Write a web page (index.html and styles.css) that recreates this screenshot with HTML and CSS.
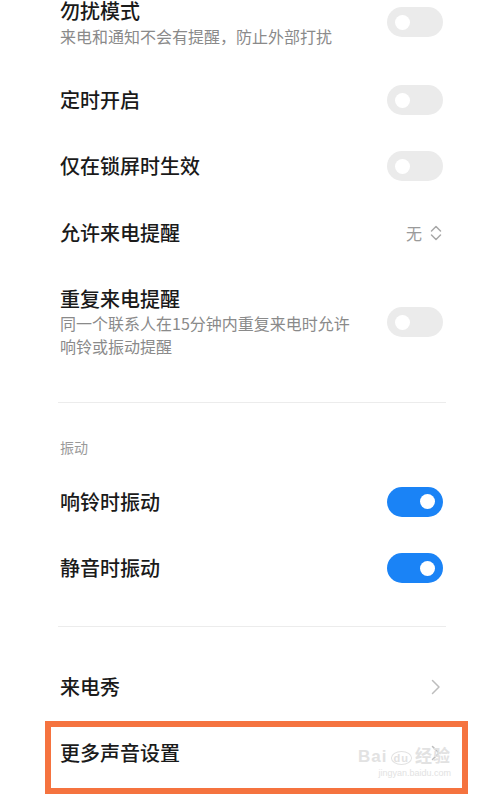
FILE: index.html
```html
<!DOCTYPE html>
<html lang="zh-CN">
<head>
    <meta charset="UTF-8">
    <meta name="viewport" content="width=device-width, initial-scale=1.0">
    <title>声音设置</title>
    <link rel="stylesheet" href="styles.css">
</head>
<body>
<div id="settings">
    <div class="item first">
        <div class="item-text">
            <div class="item-title">勿扰模式</div>
            <div class="item-desc">来电和通知不会有提醒，防止外部打扰</div>
        </div>
        <div class="switch"></div>
    </div>

    <div class="item">
        <div class="item-text">
            <div class="item-title">定时开启</div>
        </div>
        <div class="switch"></div>
    </div>

    <div class="item">
        <div class="item-text">
            <div class="item-title">仅在锁屏时生效</div>
        </div>
        <div class="switch"></div>
    </div>

    <div class="item tall">
        <div class="item-text">
            <div class="item-title">允许来电提醒</div>
        </div>
        <div class="item-value">
            无
            <svg class="updown" width="12" height="16" viewBox="0 0 12 16">
                <path d="M1.5 6 L6 1.5 L10.5 6" fill="none" stroke="#a8a8a8" stroke-width="1.5" stroke-linecap="round" stroke-linejoin="round"/>
                <path d="M1.5 10 L6 14.5 L10.5 10" fill="none" stroke="#a8a8a8" stroke-width="1.5" stroke-linecap="round" stroke-linejoin="round"/>
            </svg>
        </div>
    </div>

    <div class="item multi">
        <div class="item-text">
            <div class="item-title">重复来电提醒</div>
            <div class="item-desc">同一个联系人在15分钟内重复来电时允许<br>响铃或振动提醒</div>
        </div>
        <div class="switch"></div>
    </div>

    <div class="divider"></div>

    <div class="section-title">振动</div>

    <div class="item tall">
        <div class="item-text">
            <div class="item-title">响铃时振动</div>
        </div>
        <div class="switch on"></div>
    </div>

    <div class="item">
        <div class="item-text">
            <div class="item-title">静音时振动</div>
        </div>
        <div class="switch on"></div>
    </div>

    <div class="divider second"></div>

    <div class="item tall">
        <div class="item-text">
            <div class="item-title">来电秀</div>
        </div>
        <svg class="arrow" width="10" height="16" viewBox="0 0 10 16">
            <path d="M1.5 1.5 L8 8 L1.5 14.5" fill="none" stroke="#bdbdbd" stroke-width="1.5" stroke-linecap="round" stroke-linejoin="round"/>
        </svg>
    </div>

    <div class="item marked">
        <div class="item-text">
            <div class="item-title">更多声音设置</div>
        </div>
        <svg class="arrow" width="10" height="16" viewBox="0 0 10 16">
            <path d="M1.5 1.5 L8 8 L1.5 14.5" fill="none" stroke="#bdbdbd" stroke-width="1.5" stroke-linecap="round" stroke-linejoin="round"/>
        </svg>
        <div class="watermark">
            <span class="wm-logo">Bai<span class="wm-paw">du</span>经验</span>
            <span class="wm-url">jingyan.baidu.com</span>
        </div>
    </div>
</div>
</body>
</html>
```

FILE: styles.css
```css
body {
    margin: 0;
    padding: 0;
    background-color: #fff;
    font-family: "Noto Sans CJK SC", sans-serif;
    overflow: hidden;
}
#settings {
    padding: 0 36px 20px 60px;
}
.item {
    display: flex;
    align-items: center;
    justify-content: space-between;
    box-sizing: border-box;
    height: 66px;
    position: relative;
}
.item.tall {
    height: 67px;
}
.item.first {
    height: 67px;
    align-items: flex-start;
}
.item.multi {
    height: auto;
    padding-top: 20px;
}
.item-text {
    flex: 1;
}
.item-title {
    font-size: 20px;
    line-height: 26px;
    height: 26px;
    font-weight: 500;
    color: #1a1a1a;
}
.item.first .item-title {
    line-height: 22px;
    height: 22px;
}
.item-desc {
    font-size: 16px;
    line-height: 23px;
    color: #8a8a8a;
}
.item.first .item-desc {
    margin-top: 3px;
    height: 23px;
}
.item.multi .item-desc {
    height: 46px;
}
.item.first .switch {
    margin-top: 7px;
}
.item-value {
    display: flex;
    align-items: center;
    gap: 8px;
    font-size: 16px;
    color: #9a9a9a;
}
.switch {
    width: 56px;
    height: 30px;
    border-radius: 15px;
    background-color: #ebebeb;
    position: relative;
    flex-shrink: 0;
    margin-right: -1px;
}
.switch::after {
    content: "";
    position: absolute;
    top: 7.5px;
    left: 8px;
    width: 15px;
    height: 15px;
    border-radius: 50%;
    background-color: #fff;
}
.switch.on {
    background-color: #1a83f6;
}
.switch.on::after {
    left: auto;
    right: 8px;
}
.divider {
    height: 1px;
    background-color: #ececec;
    margin: 44px -4px 0 -2px;
}
.divider.second {
    margin-top: 25px;
    margin-bottom: 26px;
}
.section-title {
    font-size: 14px;
    line-height: 20px;
    height: 20px;
    color: #9a9a9a;
    margin-top: 34px;
    margin-bottom: 11px;
}
.arrow {
    flex-shrink: 0;
    margin-right: 1px;
}
/* orange highlight box drawn over the last row */
.marked::before {
    content: "";
    position: absolute;
    top: 1px;
    left: -15px;
    right: -26px;
    bottom: -8px;
    border: 6px solid #f5733f;
    pointer-events: none;
}
.watermark {
    position: absolute;
    right: -9px;
    top: 28px;
    display: flex;
    flex-direction: column;
    align-items: flex-end;
    color: #e2e2e2;
    pointer-events: none;
}
.wm-logo {
    font-family: "Liberation Sans", "Noto Sans CJK SC", sans-serif;
    font-size: 17px;
    font-weight: bold;
    line-height: 18px;
    letter-spacing: 1px;
}
.wm-paw {
    font-size: 11px;
    border: 1.5px solid #e2e2e2;
    border-radius: 50%;
    padding: 0 2px;
    margin: 0 3px;
}
.wm-url {
    font-family: "Liberation Sans", sans-serif;
    font-size: 9px;
    line-height: 12px;
}
```
